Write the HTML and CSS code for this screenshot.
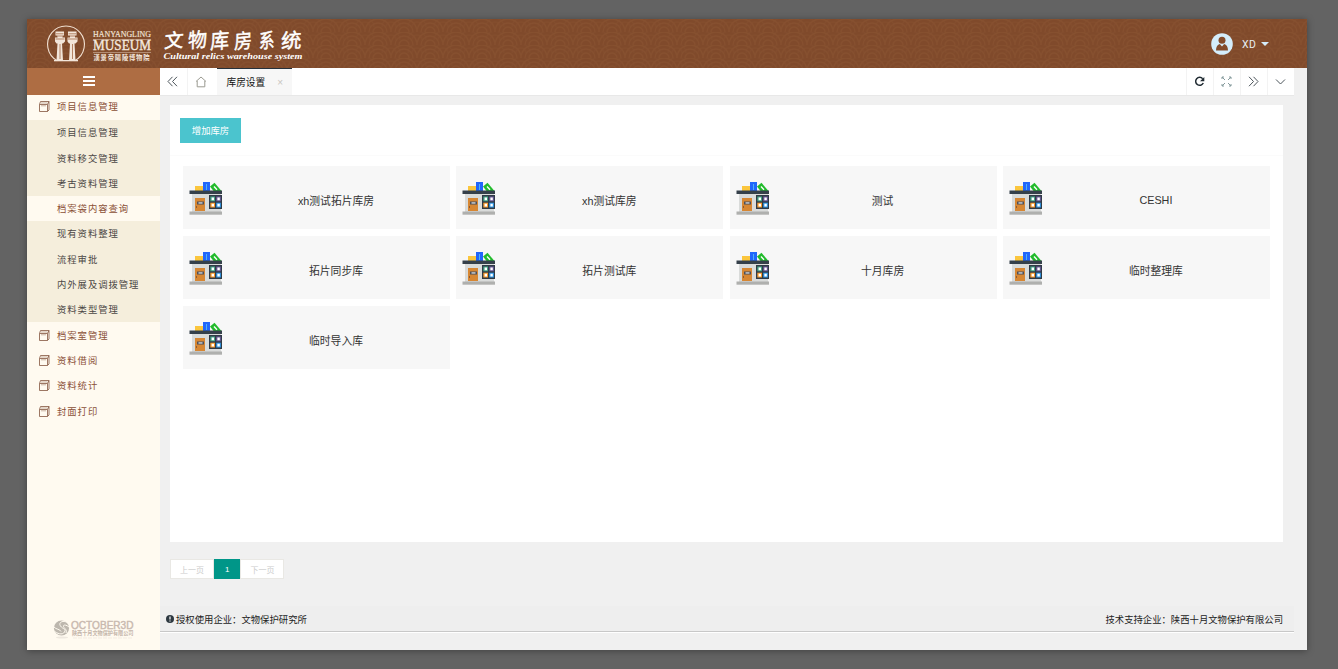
FILE: index.html
```html
<!DOCTYPE html>
<html lang="zh-CN">
<head>
<meta charset="utf-8">
<title>文物库房系统</title>
<link rel="stylesheet" href="styles.css">
</head>
<body>
<svg class="defs" width="0" height="0" aria-hidden="true">
  <symbol id="folder" viewBox="0 0 11 12">
    <path d="M.5 4.500h8v7h-8zM.5 4.500L1.500 1.500h8.500v8.500L8.500 11.500M8.500 4.500l1.500-3" fill="none" stroke="currentColor" stroke-width=".85"/>
    <path d="M2 3h6.500M2 5.800h5" stroke="currentColor" stroke-width="1" opacity=".45"/>
  </symbol>
  <symbol id="store" viewBox="0 0 33 33">
    <rect x="6" y="4" width="9" height="5" fill="#fbc63d"/>
    <rect x="14" y="0" width="7" height="9" fill="#2166fb"/><rect x="17" y="2" width="1" height="6" fill="#4fb2f5"/>
    <path d="M21 4.500l4.500-3.700L32.500 9h-8z" fill="#22bb2c"/><path d="M25 4.500l3 3.300" stroke="#fff" stroke-width="1.300"/>
    <rect x="3" y="11" width="29" height="19" fill="#d9dbda"/>
    <rect x="0.500" y="8.500" width="32.500" height="3.500" fill="#35404a"/>
    <rect x="6" y="16" width="10" height="13" fill="#d78733"/>
    <rect x="8" y="19.500" width="7" height="3" fill="#4b4f5a"/><rect x="9.500" y="20.300" width="4" height="1.300" fill="#ddd"/>
    <rect x="7" y="24" width="1" height="2" fill="#8c5b35"/>
    <rect x="20" y="13" width="13" height="14" fill="#303b46"/>
    <rect x="21.300" y="14.500" width="4.700" height="4.800" fill="#43a386"/><rect x="27.200" y="14.500" width="4.700" height="4.800" fill="#685795"/>
    <rect x="21.300" y="20.700" width="4.700" height="4.800" fill="#f79a2b"/><rect x="27.200" y="20.700" width="4.700" height="4.800" fill="#3199e8"/>
    <path d="M22.600 15.500h2.400v2.800h-2.400zM28.400 15.500h2.400v2.800h-2.400zM22.600 21.700h2.400v2.800h-2.400zM28.400 21.700h2.400v2.800h-2.400z" fill="#fff"/>
    <rect x="0.500" y="29.500" width="32.500" height="3.200" fill="#afb0ae"/>
  </symbol>
</svg>
<div class="app">
  <header class="header">
    <svg class="pattern" width="1280" height="49">
      <defs><pattern id="waves" width="26" height="13" patternUnits="userSpaceOnUse">
        <g fill="none" stroke="#86502f" stroke-width="1.300">
          <path d="M0 13a13 13 0 0 1 26 0M4 13a9 9 0 0 1 18 0M8 13a5 5 0 0 1 10 0"/>
          <path d="M-9 8a9 9 0 0 1 18 0M17 8a9 9 0 0 1 18 0M-5 8a5 5 0 0 1 10 0M21 8a5 5 0 0 1 10 0" opacity=".5"/>
        </g></pattern></defs>
      <rect width="1280" height="49" fill="url(#waves)"/>
    </svg>
    <svg class="brand" width="290" height="49" viewBox="0 0 290 49">
      <path d="M30 41.500A18.400 18.400 0 1 1 48 41.500" fill="none" stroke="#f0dfd0" stroke-width="1.100"/>
      <g fill="#f3e6da">
        <path d="M28.500 12.500h8.500v4h-1.500v2H38v4l-2 2h-1l1 17h-6.500l1-17h-1l-1.500-2v-4h2.500v-2h-2z"/>
        <path d="M41 12.500h8.500v4h-1.500v2h2.500v4l-2 2h-1l1 17H42l1-17h-1l-1.500-2v-4H43v-2h-2z"/>
        <path d="M27 41h24v1.300H27z"/>
      </g>
      <path d="M33 25v15M45.500 25v15M28.500 20h9M41 20h9M29 14.800h7.500M41.500 14.800H49M30.500 17h5M43 17h5" stroke="#ad7757" stroke-width=".9"/>
      <path d="M66 20.500h58M66 33.500h58" stroke="#c9a993" stroke-width=".7"/>
      <g fill="#f4e8de">
        <text class="serif" x="66" y="18.300" font-size="9" textLength="58" lengthAdjust="spacingAndGlyphs" stroke="#f4e8de" stroke-width=".15">HANYANGLING</text>
        <text class="serif" x="66" y="31.300" font-size="14" textLength="58" lengthAdjust="spacingAndGlyphs" stroke="#f4e8de" stroke-width=".35">MUSEUM</text>
        <text class="cjk" x="66.500" y="40.800" font-size="6.300" font-weight="700" textLength="56" lengthAdjust="spacing">漢景帝陽陵博物院</text>
      </g>
      <g fill="#fff" stroke="#fff" stroke-width=".5" class="cjk" font-weight="400">
        <text font-size="19" transform="translate(137 29) rotate(-4) skewX(-8)">文</text>
        <text font-size="20" transform="translate(161 29) rotate(-5) skewX(-6) scale(.95 1)">物</text>
        <text font-size="21" transform="translate(183 30) rotate(-4) skewX(-6) scale(.9 1)">库</text>
        <text font-size="20" transform="translate(207 30) rotate(-5) skewX(-6) scale(.9 1)">房</text>
        <text font-size="20" transform="translate(232 29.500) rotate(-5) skewX(-5) scale(.78 1)">系</text>
        <text font-size="20" transform="translate(254 29.500) rotate(-4) skewX(-5) scale(1.02 1)">统</text>
      </g>
      <text class="serif" x="136.500" y="40" font-size="9" font-style="italic" font-weight="700" fill="#fff" textLength="139" lengthAdjust="spacingAndGlyphs">Cultural relics warehouse system</text>
    </svg>
    <div class="user">
      <svg width="22" height="22" viewBox="0 0 22 22"><circle cx="11" cy="11" r="10.800" fill="#d4edfb"/><path d="M5 17.500c0-3.600 1.600-5.800 3.800-6.400L11 13.500l2.200-2.400c2.200.6 3.800 2.800 3.800 6.400z" fill="#834c2c"/><circle cx="11" cy="7.300" r="3.500" fill="#834c2c"/></svg>
      <span>XD</span><i class="caret"></i>
    </div>
  </header>
  <div class="body">
    <aside class="sidebar">
      <div class="toggle"><i></i><i></i><i></i></div>
      <nav class="menu">
        <a class="group first"><svg><use href="#folder"/></svg>项目信息管理</a>
        <div class="sub">
          <a>项目信息管理</a><a>资料移交管理</a><a>考古资料管理</a><a class="active">档案袋内容查询</a><a>现有资料整理</a><a>流程审批</a><a>内外展及调拨管理</a><a>资料类型管理</a>
        </div>
        <a class="group"><svg><use href="#folder"/></svg>档案室管理</a>
        <a class="group"><svg><use href="#folder"/></svg>资料借阅</a>
        <a class="group"><svg><use href="#folder"/></svg>资料统计</a>
        <a class="group"><svg><use href="#folder"/></svg>封面打印</a>
      </nav>
      <svg class="vendor" width="90" height="24" viewBox="0 0 90 24">
        <circle cx="8.500" cy="9" r="7.600" fill="#bdb7ae"/>
        <path d="M15 4C10 .5 5 3.500 7.500 7s6 2.500 4 6-8 1.500-10-1M16 8c-3-2.500-6-2.500-5.500-.5s4 3 2.500 6.500M1 8c2 2.500 6 2 7 4.500" fill="none" stroke="#fffaf0" stroke-width="1"/>
        <text class="sans" x="18" y="9.500" font-size="10" fill="#c9b9af" stroke="#c9b9af" stroke-width=".4" textLength="62.500" lengthAdjust="spacingAndGlyphs">OCTOBER3D</text>
        <text class="cjk" x="19" y="16" font-size="5.500" font-weight="700" fill="#c5b6ab" textLength="61.500" lengthAdjust="spacingAndGlyphs">陕西十月文物保护有限公司</text>
        <ellipse cx="9" cy="18.500" rx="6" ry="1" fill="#eee8df"/><path d="M20 19h60" stroke="#f3ebe1" stroke-dasharray="4 1"/>
      </svg>
    </aside>
    <main class="main">
      <div class="tabs">
        <span class="tool first"><svg width="11" height="11" viewBox="0 0 11 11"><path d="M5.500.8L1 5.500l4.500 4.700M10 .8L5.500 5.500l4.500 4.700"/></svg></span>
        <span class="tool home"><svg width="12" height="12" viewBox="0 0 12 12"><path d="M1 5.500L6 1l5 4.500M2.200 5v5.800h7.600V5"/></svg></span>
        <span class="tab">库房设置<b>×</b></span>
        <span class="spacer"></span>
        <span class="tool dark"><svg width="11" height="11" viewBox="0 0 11 11"><path d="M8.700 2.700A4 4 0 1 0 9.300 7"/><path class="solid" d="M10.300 1v4.200H6z"/></svg></span>
        <span class="tool expand"><svg width="11" height="11" viewBox="0 0 11 11"><path d="M1.500 1.500l2.500 2.500M9.500 1.500L7 4M1.500 9.500L4 7M9.500 9.500L7 7"/><path d="M1 3V1h2M8 1h2v2M1 8v2h2M8 10h2V8"/></svg></span>
        <span class="tool"><svg width="11" height="11" viewBox="0 0 11 11"><path d="M1 .8l4.500 4.700L1 10.200M5.500.8L10 5.500l-4.500 4.700"/></svg></span>
        <span class="tool"><svg width="11" height="11" viewBox="0 0 11 11"><path d="M1 3.500L5.500 8 10 3.500"/></svg></span>
      </div>
      <section class="panel">
        <div class="actions"><button class="add">增加库房</button></div>
        <div class="grid">
          <div class="card"><svg><use href="#store"/></svg><span>xh测试拓片库房</span></div>
          <div class="card"><svg><use href="#store"/></svg><span>xh测试库房</span></div>
          <div class="card"><svg><use href="#store"/></svg><span>测试</span></div>
          <div class="card"><svg><use href="#store"/></svg><span>CESHI</span></div>
          <div class="card"><svg><use href="#store"/></svg><span>拓片同步库</span></div>
          <div class="card"><svg><use href="#store"/></svg><span>拓片测试库</span></div>
          <div class="card"><svg><use href="#store"/></svg><span>十月库房</span></div>
          <div class="card"><svg><use href="#store"/></svg><span>临时整理库</span></div>
          <div class="card"><svg><use href="#store"/></svg><span>临时导入库</span></div>
        </div>
      </section>
      <div class="pager"><span>上一页</span><span class="current">1</span><span>下一页</span></div>
      <footer class="footer">
        <span class="licence"><svg width="8" height="8" viewBox="0 0 8 8"><circle cx="4" cy="4" r="4" fill="#2d3840"/><path d="M4 1.500v3M4 5.400v1.200" stroke="#fff" stroke-width="1.200"/></svg>授权使用企业：文物保护研究所</span>
        <span>技术支持企业：陕西十月文物保护有限公司</span>
      </footer>
    </main>
  </div>
</div>
</body>
</html>
```
FILE: styles.css
```css
* { box-sizing: border-box; }
body {
  margin: 0;
  height: 669px;
  padding: 19px 31px 19px 27px;
  overflow: hidden;
  background: #636363;
  font-family: "Liberation Sans", "Noto Sans CJK SC", sans-serif;
  font-size: 9.35px;
  color: #333;
}
.defs { position: absolute; }
.serif { font-family: "Liberation Serif", serif; }
.sans { font-family: "Liberation Sans", sans-serif; }
.cjk { font-family: "Noto Sans CJK SC", sans-serif; }
.app {
  width: 1280px;
  height: 631px;
  display: flex;
  flex-direction: column;
  background: #f0f0f0;
  box-shadow: 0 1px 7px rgba(0, 0, 0, .35);
}
.header {
  position: relative;
  height: 49px;
  flex: none;
  display: flex;
  justify-content: space-between;
  background: #804a2b;
}
.pattern { position: absolute; left: 0; top: 0; }
.brand { position: relative; }
.user {
  position: relative;
  display: flex;
  align-items: center;
  padding: 1px 38.500px 0 0;
  color: #e6edf0;
  font-family: Roboto, sans-serif;
  font-size: 10.5px;
  letter-spacing: .5px;
}
.user svg { margin-right: 9.500px; }
.caret {
  margin-left: 4px;
  border: 4px solid transparent;
  border-top: 4px solid #d4edfb;
  border-bottom: 0;
}
.body { flex: 1; display: flex; min-height: 0; }
.sidebar {
  width: 133px;
  flex: none;
  display: flex;
  flex-direction: column;
  background: #fffaf0;
}
.toggle {
  height: 27px;
  flex: none;
  display: flex;
  flex-direction: column;
  align-items: center;
  justify-content: center;
  gap: 2px;
  padding: 0 9px 2px 0;
  background: #ae6d43;
}
.toggle i { width: 12px; height: 2px; background: #fff; }
.menu { flex: 1; color: #8a4f36; letter-spacing: .95px; }
.menu a {
  display: flex;
  align-items: center;
  height: 25.25px;
  padding: 0 0 1px 30px;
  white-space: nowrap;
}
.menu .group { padding: 0 0 0 12px; }
.menu .first { padding-bottom: 3px; }
.group svg { width: 11px; height: 12px; margin-right: 7px; color: #8b5f49; }
.sub { background: #f5eedc; color: #4b4745; }
.sub .active { background: #fffaf0; color: #8a4f36; }
.vendor { flex: none; margin: 0 0 7px 26px; }
.main {
  flex: 1;
  display: flex;
  flex-direction: column;
  padding-right: 13px;
  min-width: 0;
}
.tabs {
  height: 28px;
  flex: none;
  display: flex;
  background: #fff;
  border-bottom: 1px solid #e8e8e8;
}
.tool {
  width: 26.9px;
  display: flex;
  align-items: center;
  justify-content: center;
  padding-right: 2px;
  border-left: 1px solid #f3f3f3;
}
.tool svg { fill: none; stroke: #4c555b; stroke-width: 1; }
.tool.home { width: 30.100px; }
.tool.first { border-left: 0; }
.home svg { stroke: #9b9b92; }
.tool.dark svg { stroke: #202b32; stroke-width: 1.5; }
.tool.dark .solid { fill: #202b32; stroke: none; }
.expand svg { stroke: #668083; stroke-width: .8; }
.tab {
  width: 75px;
  display: flex;
  align-items: center;
  padding-left: 9.500px;
  border-top: 1px solid #26313b;
  background: #f7f7f7;
  color: #111;
  font-size: 9.7px;
}
.tab b { margin-left: 12px; font-weight: 400; font-size: 10px; color: #c9c5bf; }
.spacer { flex: 1; }
.panel {
  height: 437px;
  flex: none;
  margin: 9px 11px 0 10px;
  background: #fff;
}
.actions {
  height: 51px;
  padding: 13px 0 0 10px;
  border-bottom: 1px solid #fbfbfb;
}
.add {
  display: block;
  width: 61px;
  height: 25px;
  padding: 0 0 1px;
  border: 0;
  background: #4bc4ce;
  color: #fff;
  font: inherit;
}
.grid {
  display: grid;
  grid-template-columns: repeat(4, 267px);
  grid-auto-rows: 63px;
  gap: 7px 6.3px;
  padding: 10px 0 0 13px;
}
.card {
  display: flex;
  align-items: center;
  padding: 4px 0 0 6px;
  background: #f7f7f7;
  font-size: 10.8px;
}
.card svg { width: 33px; height: 33px; flex: none; margin-bottom: 3px; }
.card span { width: 228.500px; text-align: center; }
.pager {
  display: flex;
  height: 20px;
  flex: none;
  margin: 17px 0 0 10px;
  font-size: 8px;
  color: #ccc;
}
.pager span {
  width: 44px;
  display: flex;
  align-items: center;
  justify-content: center;
  background: #fff;
  border: 1px solid #e9e8e4;
}
.pager .current { width: 26.400px; background: #009688; border-color: #009688; color: #fff; }
.footer {
  display: flex;
  align-items: center;
  justify-content: space-between;
  height: 26px;
  flex: none;
  margin-top: 27px;
  padding: 0 11px 0 6px;
  background: #eee;
  border-bottom: 1px solid #c8c8c8;
  box-shadow: 0 1px #fff;
  color: #222;
}
.licence { display: flex; align-items: center; gap: 2px; }
```
